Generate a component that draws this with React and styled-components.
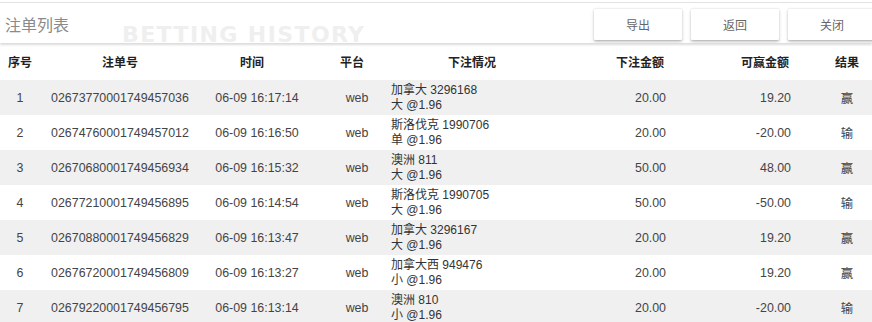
import React from 'react';
import styled, { createGlobalStyle } from 'styled-components';

const GlobalStyle = createGlobalStyle`
  html, body {
    margin: 0;
    padding: 0;
    background: #fff;
    overflow: hidden;
  }
  body {
    font-family: "Liberation Sans", "Noto Sans CJK SC", sans-serif;
  }
`;

// column layout: width, data alignment, padding
const cols = [
  { w: 40, align: 'center', head: 'center' },
  { w: 160, align: 'center', head: 'center' },
  { w: 114, align: 'center', head: 'center', hpr: 10 },
  { w: 72, align: 'center', head: 'center', pl: 14, hpl: 4 },
  { w: 172, align: 'left', head: 'center', pl: 5 },
  { w: 108, align: 'right', head: 'right', hpr: 2 },
  { w: 156, align: 'right', head: 'right', pr: 31, hpr: 33 },
  { w: 50, align: 'center', head: 'center' },
];

const template = cols.map((c) => `${c.w}px`).join(' ');

const headers = ['序号', '注单号', '时间', '平台', '下注情况', '下注金额', '可赢金额', '结果'];

const rows = [
  ['1', '02673770001749457036', '06-09 16:17:14', 'web', ['加拿大 3296168', '大 @1.96'], '20.00', '19.20', '赢'],
  ['2', '02674760001749457012', '06-09 16:16:50', 'web', ['斯洛伐克 1990706', '单 @1.96'], '20.00', '-20.00', '输'],
  ['3', '02670680001749456934', '06-09 16:15:32', 'web', ['澳洲 811', '大 @1.96'], '50.00', '48.00', '赢'],
  ['4', '02677210001749456895', '06-09 16:14:54', 'web', ['斯洛伐克 1990705', '大 @1.96'], '50.00', '-50.00', '输'],
  ['5', '02670880001749456829', '06-09 16:13:47', 'web', ['加拿大 3296167', '大 @1.96'], '20.00', '19.20', '赢'],
  ['6', '02676720001749456809', '06-09 16:13:27', 'web', ['加拿大西 949476', '小 @1.96'], '20.00', '19.20', '赢'],
  ['7', '02679220001749456795', '06-09 16:13:14', 'web', ['澳洲 810', '小 @1.96'], '20.00', '-20.00', '输'],
];

const App = () => {
  return (
    <Page>
      <GlobalStyle />
      <TitleBar>
        <Title>注单列表</Title>
        <Watermark>BETTING HISTORY</Watermark>
        <ButtonGroup>
          <Button>导出</Button>
          <Button>返回</Button>
          <Button>关闭</Button>
        </ButtonGroup>
      </TitleBar>
      <Table>
        <HeadRow>
          {headers.map((h, i) => (
            <HeadCell key={h} $align={cols[i].head} $pl={cols[i].hpl} $pr={cols[i].hpr}>
              {h}
            </HeadCell>
          ))}
        </HeadRow>
        {rows.map((r, idx) => (
          <Row key={r[0]} $odd={idx % 2 === 0}>
            {r.map((v, i) => (
              <Cell key={i} $align={cols[i].align} $pl={cols[i].pl} $pr={cols[i].pr}>
                {Array.isArray(v) ? (
                  <BetInfo>
                    <span>{v[0]}</span>
                    <span>{v[1]}</span>
                  </BetInfo>
                ) : (
                  v
                )}
              </Cell>
            ))}
          </Row>
        ))}
      </Table>
    </Page>
  );
};

const Page = styled.div`
  width: 872px;
  height: 322px;
  overflow: hidden;
  padding-top: 2px;
  box-sizing: border-box;
`;

const TitleBar = styled.div`
  position: relative;
  display: flex;
  align-items: center;
  height: 40px;
  border-top: 1px solid #e2e2e2;
  background: #fff;
  box-shadow: 0 2px 2px rgba(0, 0, 0, 0.14);
  overflow: hidden;
  z-index: 1;
`;

const Title = styled.div`
  padding-left: 5px;
  padding-top: 1px;
  font-size: 16px;
  color: #8a8a8a;
  position: relative;
  z-index: 1;
`;

const Watermark = styled.div`
  position: absolute;
  left: 122px;
  top: 19px;
  font-family: "DejaVu Sans", sans-serif;
  font-weight: bold;
  font-size: 22px;
  letter-spacing: 1.4px;
  color: #efefef;
  white-space: nowrap;
`;

const ButtonGroup = styled.div`
  display: flex;
  gap: 9px;
  margin-left: auto;
  margin-right: -4px;
  align-self: flex-start;
  padding-top: 5px;
  position: relative;
  z-index: 1;
`;

const Button = styled.button`
  width: 88px;
  height: 32px;
  border: none;
  border-top: 1px solid #f0f0f0;
  background: #fff;
  border-radius: 1px;
  box-shadow: 0 1px 2px rgba(0, 0, 0, 0.22), 0 3px 4px rgba(0, 0, 0, 0.12);
  font-family: "Liberation Sans", "Noto Sans CJK SC", sans-serif;
  font-size: 12px;
  color: #666;
  padding: 0;
`;

const Table = styled.div`
  position: relative;
`;

const HeadRow = styled.div`
  display: grid;
  grid-template-columns: ${template};
  height: 37px;
  align-items: center;
  background: #fff;
`;

const HeadCell = styled.div`
  text-align: ${(p) => p.$align};
  padding-left: ${(p) => p.$pl || 0}px;
  padding-right: ${(p) => p.$pr || 0}px;
  font-size: 12px;
  font-weight: bold;
  color: #222;
`;

const Row = styled.div`
  display: grid;
  grid-template-columns: ${template};
  height: 35px;
  align-items: center;
  background: ${(p) => (p.$odd ? '#f0f0f0' : '#fff')};
`;

const Cell = styled.div`
  text-align: ${(p) => p.$align};
  padding-left: ${(p) => p.$pl || 0}px;
  padding-right: ${(p) => p.$pr || 0}px;
  font-size: 12.4px;
  color: #444;
  white-space: nowrap;
`;

const BetInfo = styled.div`
  display: flex;
  flex-direction: column;
  line-height: 15px;
  font-size: 12px;
  color: #333;
`;

export default App;
